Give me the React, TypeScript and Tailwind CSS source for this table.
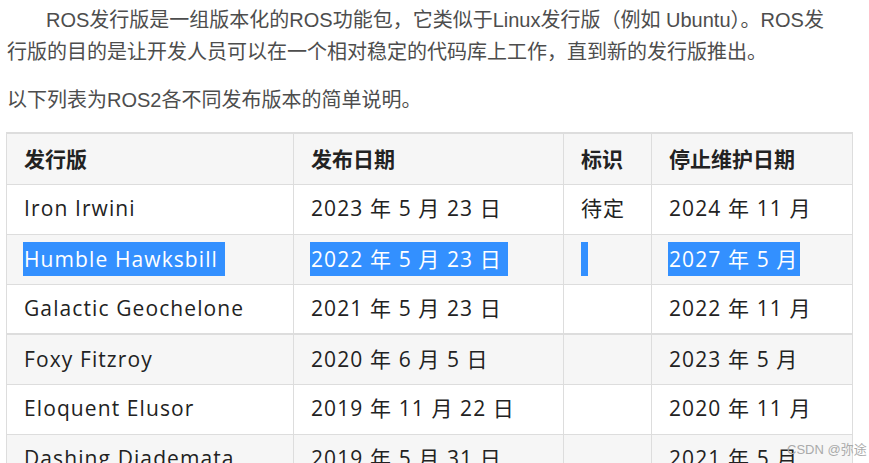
import { FC, ReactNode } from "react";

type Row = {
  name: string;
  release: string;
  tag?: string;
  eol: string;
  selected?: boolean;
};

const rows: Row[] = [
  { name: "Iron Irwini", release: "2023 年 5 月 23 日", tag: "待定", eol: "2024 年 11 月" },
  { name: "Humble Hawksbill", release: "2022 年 5 月 23 日", eol: "2027 年 5 月", selected: true },
  { name: "Galactic Geochelone", release: "2021 年 5 月 23 日", eol: "2022 年 11 月" },
  { name: "Foxy Fitzroy", release: "2020 年 6 月 5 日", eol: "2023 年 5 月" },
  { name: "Eloquent Elusor", release: "2019 年 11 月 22 日", eol: "2020 年 11 月" },
  { name: "Dashing Diademata", release: "2019 年 5 月 31 日", eol: "2021 年 5 月" },
];

const Sel: FC<{ children: ReactNode; on?: boolean; tail?: boolean }> = ({ children, on, tail }) =>
  on ? (
    <span
      className={`-ml-px inline-block h-[34px] bg-[#3390ff] pl-px leading-[34px] text-white whitespace-pre ${
        tail ? "pr-0" : "pr-[2px]"
      }`}
    >
      {children}
      {tail ? " " : ""}
    </span>
  ) : (
    <span>{children}</span>
  );

const App: FC = () => {
  return (
    <div className="relative min-h-[463px] w-[869px] overflow-hidden bg-white">
      <div
        className="ml-[7px] w-[835px] pt-[4px] text-[20px] leading-[32px] text-[#4d4d4d]"
        style={{ fontFamily: '"Liberation Sans", "Noto Sans CJK SC", sans-serif' }}
      >
        <p className="mb-[16px] indent-[39px]">
          ROS发行版是一组版本化的ROS功能包，它类似于Linux发行版（例如 Ubuntu）。ROS发行版的目的是让开发人员可以在一个相对稳定的代码库上工作，直到新的发行版推出。
        </p>
        <p className="mb-[16px]">以下列表为ROS2各不同发布版本的简单说明。</p>
      </div>

      <table
        className="ml-[6px] w-[846px] table-fixed border-collapse border-t-2 border-[#dddddd] text-[21px] text-[#222]"
        style={{ fontFamily: '"Open Sans", "Noto Sans CJK SC", sans-serif' }}
      >
        <colgroup>
          <col className="w-[287px]" />
          <col className="w-[270px]" />
          <col className="w-[88px]" />
          <col className="w-[201px]" />
        </colgroup>
        <thead>
          <tr className="h-[51px] bg-[#f6f6f6]">
            {["发行版", "发布日期", "标识", "停止维护日期"].map((h) => (
              <th
                key={h}
                className="border border-[#dddddd] px-[17px] text-left font-bold"
                style={{ fontFamily: '"Noto Sans CJK SC", sans-serif' }}
              >
                {h}
              </th>
            ))}
          </tr>
        </thead>
        <tbody className="tracking-[1.1px]">
          {rows.map((r, i) => (
            <tr
              key={r.name}
              className={`h-[50px] ${i % 2 === 1 ? "bg-[#f6f6f6]" : "bg-white"} ${
                i === 3 ? "border-t-2 border-[#dddddd]" : ""
              }`}
            >
              <td className="border border-[#dddddd] px-[17px] whitespace-nowrap">
                <Sel on={r.selected} tail>
                  {r.name}
                </Sel>
              </td>
              <td className="border border-[#dddddd] px-[17px] whitespace-nowrap">
                <Sel on={r.selected} tail>
                  {r.release}
                </Sel>
              </td>
              <td className="border border-[#dddddd] px-[17px] whitespace-nowrap">
                {r.selected ? (
                  <span className="inline-block h-[34px] w-[7px] bg-[#3390ff] align-middle" />
                ) : (
                  r.tag
                )}
              </td>
              <td className="border border-[#dddddd] px-[17px] whitespace-nowrap">
                <Sel on={r.selected}>{r.eol}</Sel>
              </td>
            </tr>
          ))}
        </tbody>
      </table>

      {/* watermark */}
      <div
        className="absolute left-[787px] top-[440px] whitespace-nowrap text-[13px] text-[#aaa]"
        style={{ fontFamily: '"Liberation Sans", "Noto Sans CJK SC", sans-serif' }}
      >
        CSDN @弥途
      </div>
    </div>
  );
};

export default App;
